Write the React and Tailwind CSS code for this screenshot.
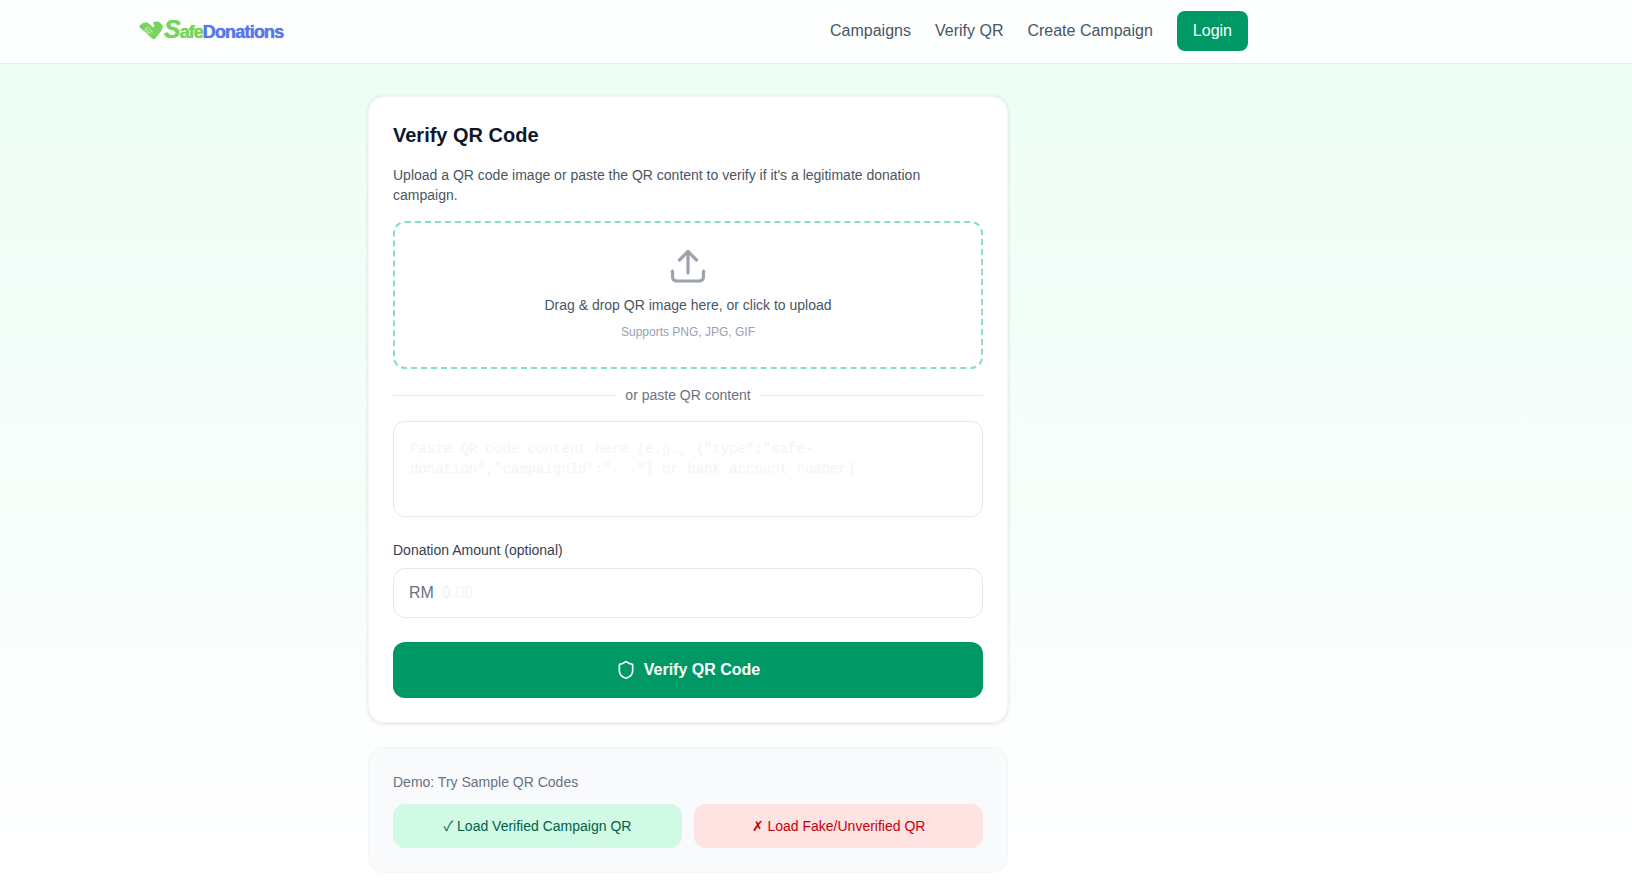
import React from 'react';
import { Shield } from 'lucide-react';

function Logo() {
  return (
    <div className="flex items-center select-none mb-[3px]">
      <svg width="26" height="22" viewBox="0 0 24 20" className="shrink-0 mt-[3px]">
        <path d="M1 6C4 2 8 1 11 4C13 6 14 7 15 6C15 4 14 3 14 2C17 0 22 2 23 6C22 10 19 13 16 17C15 18 14 18 12 16C9 13 5 10 1 6Z" fill="#76d35d" />
        <path d="M7 7L12 13M9 6L14 12M6 9L10 13" stroke="#d5f2cc" strokeWidth="1.2" strokeDasharray="1.5 1" fill="none" />
      </svg>
      <div className="flex items-baseline font-['Liberation_Sans',sans-serif] font-bold leading-none [text-shadow:0_0_1px_currentColor]">
        <span className="italic text-[25px] text-[#76d35d]">S</span>
        <span className="text-[18px] text-[#76d35d] tracking-[-1px] -ml-px">afe</span>
        <span className="text-[18px] text-[#5b76ea] tracking-[-0.8px]">Donations</span>
      </div>
    </div>
  );
}

function Navbar() {
  return (
    <header className="bg-white/90 border-b border-emerald-100">
      <div className="w-[1376px]">
        <nav className="max-w-6xl mx-auto pl-[26px] pr-[16px] h-[63px] pb-px flex items-center justify-between">
          <Logo />
          <div className="flex items-center gap-6 text-base text-gray-600">
            <a>Campaigns</a>
            <a>Verify QR</a>
            <a>Create Campaign</a>
            <button className="h-[40px] px-4 rounded-lg bg-emerald-600 text-white">Login</button>
          </div>
        </nav>
      </div>
    </header>
  );
}

export default function App() {
  return (
    <div className="min-h-screen font-['Liberation_Sans',Arial,sans-serif] bg-gradient-to-b from-emerald-50 to-white">
      <Navbar />

      <div className="w-[1376px]">
        <main className="w-[640px] mx-auto pt-8 pb-[21px]">
          {/* Verify card */}
          <section className="bg-white border border-gray-100 rounded-2xl shadow-[0_1px_4px_rgba(0,0,0,0.12)] p-6">
            <h1 className="text-xl font-bold text-gray-900 mb-4">Verify QR Code</h1>
            <p className="text-sm text-gray-600 mb-4">
              Upload a QR code image or paste the QR content to verify if it's a legitimate donation campaign.
            </p>

            <div className="border-2 border-dashed border-[#86e0ba] rounded-xl h-[148px] flex flex-col items-center pt-6">
              <svg width="40" height="40" viewBox="0 0 40 40" fill="none" stroke="#9ca3af" strokeWidth="3.2" strokeLinecap="round" strokeLinejoin="round">
                <path d="M20 5V26" />
                <path d="M11.5 13L20 4.5L28.5 13" />
                <path d="M4.5 24V30a4 4 0 0 0 4 4H31.5a4 4 0 0 0 4-4V24" />
              </svg>
              <p className="text-sm text-gray-600 mt-2">Drag &amp; drop QR image here, or click to upload</p>
              <p className="text-xs text-gray-400 mt-[9px]">Supports PNG, JPG, GIF</p>
            </div>

            <div className="flex items-center gap-2 my-4">
              <div className="flex-1 h-px bg-gray-200"></div>
              <span className="text-sm text-gray-500">or paste QR content</span>
              <div className="flex-1 h-px bg-gray-200"></div>
            </div>

            <textarea
              rows={3}
              readOnly
              placeholder={'Paste QR code content here (e.g., {"type":"safe-donation","campaignId":"..."} or bank account number)'}
              className="block w-full h-[96px] px-4 py-[17px] border border-gray-200 rounded-xl text-sm font-['Liberation_Mono',monospace] resize-none outline-none placeholder:text-gray-100"
            />

            <label className="block text-sm text-gray-700 mt-[23px] mb-2">Donation Amount (optional)</label>
            <div className="h-[50px] px-[15px] flex items-center gap-2 border border-gray-200 rounded-xl">
              <span className="text-gray-500">RM</span>
              <input
                readOnly
                placeholder="0.00"
                className="flex-1 min-w-0 outline-none text-base placeholder:text-gray-100"
              />
            </div>

            <button className="w-full h-[56px] mt-6 rounded-xl bg-emerald-600 text-white font-bold flex items-center justify-center gap-2">
              <Shield className="w-5 h-5" strokeWidth={2} />
              Verify QR Code
            </button>
          </section>

          {/* Demo samples */}
          <section className="mt-6 bg-gray-50 border border-gray-100 rounded-2xl p-6">
            <p className="text-sm text-gray-500 mb-3">Demo: Try Sample QR Codes</p>
            <div className="grid grid-cols-2 gap-3">
              <button className="h-[44px] pb-px rounded-xl bg-emerald-100 text-emerald-800 text-sm">
                <span className="font-['Noto_Sans_CJK_JP']">✓</span> Load Verified Campaign QR
              </button>
              <button className="h-[44px] pb-px rounded-xl bg-red-100 text-red-700 text-sm">
                <span className="font-['Noto_Sans_CJK_JP']">✗</span> Load Fake/Unverified QR
              </button>
            </div>
          </section>
        </main>
      </div>
    </div>
  );
}
